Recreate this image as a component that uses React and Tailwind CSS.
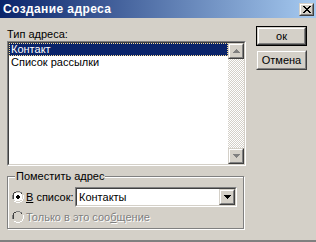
import React from "react";

const font = { fontFamily: '"Liberation Sans", Arial, sans-serif' };

function Sunken({ className = "", innerClassName = "", children }) {
  return (
    <div className={"border border-t-[#808080] border-l-[#808080] border-r-white border-b-white " + className}>
      <div className={"h-full border border-t-[#404040] border-l-[#404040] border-r-[#d4d0c8] border-b-[#d4d0c8] " + innerClassName}>
        {children}
      </div>
    </div>
  );
}

function Raised({ className = "", innerClassName = "", children }) {
  return (
    <div className={"border border-t-[#d4d0c8] border-l-[#d4d0c8] border-r-[#404040] border-b-[#404040] bg-[#d4d0c8] " + className}>
      <div className={"h-full border border-t-white border-l-white border-r-[#808080] border-b-[#808080] flex items-center justify-center " + innerClassName}>
        {children}
      </div>
    </div>
  );
}

function Arrow({ up, color = "#808080" }) {
  return (
    <svg width="7" height="4" viewBox="0 0 7 4" shapeRendering="crispEdges">
      {up ? (
        <path d="M3 0h1v1h1v1h1v1h1v1H0V3h1V2h1V1h1z" fill={color} />
      ) : (
        <path d="M0 0h7v1H6v1H5v1H4v1H3V3H2V2H1V1H0z" fill={color} />
      )}
    </svg>
  );
}

function Radio({ checked, disabled }) {
  return (
    <svg width="12" height="12" viewBox="0 0 12 12" shapeRendering="crispEdges">
      <path d="M4 0h4v1h2v1h-2v-1h-4v1h-2v-1h2zM1 2h1v2h-1v4h-1v-4h1z" fill="#808080" />
      <path d="M4 1h4v1h2v2h-1v-2h-1v-1h-4v1h-2v2h-1v-2h1v-1h2zM1 4h1v4h-1z" fill="#404040" />
      <path d="M3 2h6v1h1v6h-1v1h-6v-1h-1v-6h1z" fill={disabled ? "#d4d0c8" : "#fff"} />
      <path d="M11 4h1v4h-1v2h-1v1h-2v1h-4v-1h-2v-1h2v1h4v-1h2v-2h1z" fill="#fff" />
      <path d="M10 4h1v4h-1v2h-2v1h-4v-1h-2v-1h1v1h1v0h4v-1h2v-2h0z" fill="#d4d0c8" />
      {checked && <path d="M5 4h2v1h1v2h-1v1h-2v-1h-1v-2h1z" fill="#000" />}
    </svg>
  );
}

export default function App() {
  return (
    <div
      className="w-[316px] h-[242px] bg-[#d4d0c8] flex flex-col text-[11px] text-black overflow-hidden border-b-2 border-b-[#808080]"
      style={font}
    >
      {/* title bar */}
      <div className="h-[18px] shrink-0 flex items-center justify-between pl-[3px] pr-[2px] bg-[linear-gradient(to_right,#0a246a,#a6caf0)]">
        <span className="text-white font-bold text-[12px] leading-[18px] tracking-[0.4px]">Создание адреса</span>
        <Raised className="w-[15px] h-[13px]">
          <svg width="8" height="7" viewBox="0 0 8 7" shapeRendering="crispEdges">
            <path d="M0 0h2v1h1v1h2V1h1V0h2v1H7v1H6v1H5v1h1v1h1v1h1v1H6V6H5V5H3v1H2v1H0V6h1V5h1V4h1V3H2V2H1V1H0z" fill="#000" />
          </svg>
        </Raised>
      </div>

      {/* body */}
      <div className="flex flex-1 pl-[7px]">
        {/* left column */}
        <div className="w-[239px] flex flex-col pt-[9px]">
          <div className="h-[14px] leading-[14px]">Тип адреса:</div>
          <Sunken className="h-[125px]" innerClassName="flex bg-white">
            <div className="flex-1 flex flex-col">
              <div className="h-[13px] leading-[11px] bg-[#0a246a] text-white pl-[1px] border border-dotted border-[#f5db95]">
                Контакт
              </div>
              <div className="h-[13px] leading-[13px] pl-[2px]">Список рассылки</div>
            </div>
            <div className="w-[16px] flex flex-col bg-[repeating-conic-gradient(#ffffff_0_25%,#d4d0c8_0_50%)] bg-size-[2px_2px]">
              <Raised className="h-[16px] w-[16px]">
                <Arrow up />
              </Raised>
              <div className="flex-1" />
              <Raised className="h-[16px] w-[16px]">
                <Arrow />
              </Raised>
            </div>
          </Sunken>

          {/* group box */}
          <div className="relative mt-[10px] w-[237px] h-[53px] border border-[#808080] shadow-[inset_1px_1px_0_#fff,1px_1px_0_#fff] pt-[10px] pl-[4px]">
            <span className="absolute left-[7px] top-[-7px] px-[1px] bg-[#d4d0c8] leading-[13px]">
              Поместить адрес
            </span>
            <div className="h-[20px] flex items-center">
              <Radio checked />
              <span className="ml-[2px] w-[49px]">
                <span className="underline">В</span> список:
              </span>
              <Sunken className="w-[162px] h-[20px]" innerClassName="flex bg-white">
                <div className="flex-1 pl-[2px] leading-[16px]">Контакты</div>
                <Raised className="w-[16px] h-[16px]">
                  <Arrow color="#000" />
                </Raised>
              </Sunken>
            </div>
            <div className="h-[20px] flex items-center">
              <Radio disabled />
              <span className="ml-[2px] text-[#808080] [text-shadow:1px_1px_0_#fff]">
                Только в это соо<span className="underline">б</span>щение
              </span>
            </div>
          </div>
        </div>

        {/* right column */}
        <div className="ml-[10px] pt-[8px] flex flex-col gap-[4px]">
          <div className="w-[51px] h-[20px] border border-black">
            <Raised className="h-full">
              <span>ок</span>
            </Raised>
          </div>
          <Raised className="w-[51px] h-[20px]">
            <span>Отмена</span>
          </Raised>
        </div>
      </div>
    </div>
  );
}
